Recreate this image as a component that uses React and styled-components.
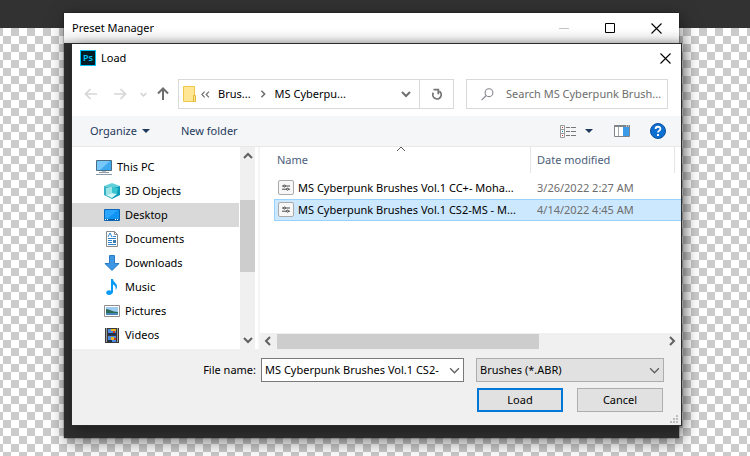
import React, { useState } from "react";
import styled, { createGlobalStyle, css } from "styled-components";

const PLACES = [
  { id: "3d", label: "3D Objects", icon: <ObjectsIcon /> },
  { id: "desktop", label: "Desktop", icon: <DesktopIcon /> },
  { id: "documents", label: "Documents", icon: <DocumentIcon /> },
  { id: "downloads", label: "Downloads", icon: <DownloadIcon /> },
  { id: "music", label: "Music", icon: <MusicIcon /> },
  { id: "pictures", label: "Pictures", icon: <PictureIcon /> },
  { id: "videos", label: "Videos", icon: <VideoIcon /> },
];

const FILES = [
  { id: 1, name: "MS Cyberpunk Brushes Vol.1 CC+- Moha...", date: "3/26/2022 2:27 AM" },
  { id: 2, name: "MS Cyberpunk Brushes Vol.1 CS2-MS - M...", date: "4/14/2022 4:45 AM" },
];

function CloseIcon() {
  return (
    <svg width="11" height="11" viewBox="0 0 11 11" stroke="#000" strokeWidth="1.1" aria-hidden="true">
      <path d="M.5 .5l10 10M10.5 .5l-10 10" />
    </svg>
  );
}

function Arrow({ dir, color }) {
  const turn = { left: 0, up: 90, right: 180 }[dir];
  return (
    <svg width="14" height="14" viewBox="0 0 14 14" fill="none" stroke={color} strokeWidth={dir === "up" ? 2 : 1.7} aria-hidden="true">
      <path transform={`rotate(${turn} 7 7)`} d="M13 7H1.8M6.5 2L1.5 7l5 5" />
    </svg>
  );
}

function Chevron({ dir = "down", size = 10, color = "#606060", weight = 2 }) {
  const turn = { down: 0, left: 90, up: 180, right: 270 }[dir];
  return (
    <svg width={size} height={size} viewBox="0 0 10 10" fill="none" stroke={color} strokeWidth={weight} aria-hidden="true">
      <path transform={`rotate(${turn} 5 5)`} d="M1 3l4 4 4-4" />
    </svg>
  );
}

function DoubleChevron() {
  return (
    <svg width="9" height="7" viewBox="0 0 9 7" fill="none" stroke="#707070" strokeWidth="1.2" aria-hidden="true">
      <path d="M3.600 .7L.9 3.500l2.700 2.800M7.900 .7L5.200 3.500l2.700 2.800" />
    </svg>
  );
}

function Caret() {
  return (
    <svg width="8" height="4" viewBox="0 0 8 4" fill="#1e395b" aria-hidden="true">
      <path d="M0 0h8L4 4z" />
    </svg>
  );
}

function FolderIcon() {
  return (
    <svg width="14" height="17" viewBox="0 0 14 17" aria-hidden="true">
      <path d="M.5 .5h11v15H.5z" fill="#ffe695" stroke="#edc84b" />
      <path d="M10.5 9.5h2v6h-2z" fill="#ffe695" stroke="#e2b93b" />
    </svg>
  );
}

function RefreshIcon() {
  return (
    <svg width="12" height="13" viewBox="0 0 12 13" fill="none" stroke="#757575" strokeWidth="1.8" aria-hidden="true">
      <path d="M8.300 3.200A4.200 4.200 0 1 1 2.300 4.700" />
      <path d="M2.500 1.600h4.800v4.600" />
    </svg>
  );
}

function SearchIcon() {
  return (
    <svg width="13" height="13" viewBox="0 0 13 13" fill="none" stroke="#858590" strokeWidth="1.1" aria-hidden="true">
      <circle cx="8" cy="4.7" r="3.9" />
      <path d="M5.2 7.5L.6 12.2" />
    </svg>
  );
}

function ViewIcon() {
  return (
    <svg width="16" height="13" viewBox="0 0 16 13" aria-hidden="true">
      <path d="M.5 .5h4v12h-4zM.5 4.5h4M.5 8.5h4" fill="#fff" stroke="#999" />
      <path d="M2 2h1v1H2zM2 10h1v1H2z" fill="#c33" />
      <path d="M2 6h1v1H2z" fill="#27c" />
      <path d="M6 2.500h4M11 2.500h5M6 6.500h4M11 6.500h5M6 10.500h4M11 10.500h5" stroke="#777" />
    </svg>
  );
}

function PaneIcon() {
  return (
    <svg width="16" height="12" viewBox="0 0 16 12" aria-hidden="true">
      <path d="M.5 .5h15v11H.5z" fill="#fff" stroke="#808488" />
      <path d="M0 0h16v2H0z" fill="#808488" />
      <path d="M4.5 2v9" stroke="#a5a8ab" />
      <path d="M9 2h6v9H9z" fill="#3b9be8" />
      <path d="M12 .5h1v1h-1zM14 .5h1v1h-1z" fill="#fff" />
    </svg>
  );
}

function HelpIcon() {
  return (
    <svg width="16" height="16" viewBox="0 0 16 16" aria-hidden="true">
      <circle cx="8" cy="8" r="7.5" fill="#0d6fd0" stroke="#0a4f9c" />
      <path d="M5.600 6C5.600 3 10.400 3 10.400 5.900 10.400 7.600 8 7.700 8 9.600" fill="none" stroke="#fff" strokeWidth="1.8" />
      <path d="M7 11h2v2H7z" fill="#fff" />
    </svg>
  );
}

function PcIcon() {
  return (
    <svg width="16" height="16" viewBox="0 0 16 16" aria-hidden="true">
      <path d="M.5 1.500h15v10H.5z" fill="#3fa9f0" stroke="#4a6d85" />
      <path d="M1 2h13L4 11H1z" fill="#76c8fa" />
      <path d="M6 12h4v1H6z" fill="#b8c4cc" />
      <path d="M3 13.500h10M0 15.500h16" stroke="#8b9ba6" />
    </svg>
  );
}

function ObjectsIcon() {
  return (
    <svg width="16" height="16" viewBox="0 0 16 16" aria-hidden="true">
      <path d="M0 3l8-3 8 3-8 2z" fill="#5fd0da" />
      <path d="M0 3l8 2v11l-8-4z" fill="#35b0c4" />
      <path d="M16 3L8 5v11l8-4z" fill="#0a9ab8" />
      <path d="M2 5l6-1v6l-6 2z" fill="#9be4e6" />
      <path d="M8 4l6 1-1 6-5-1z" fill="#38c4cf" />
      <path d="M2 12l6-2 5 1-5 4z" fill="#d2f6f6" />
    </svg>
  );
}

function DesktopIcon() {
  return (
    <svg width="16" height="12" viewBox="0 0 16 12" aria-hidden="true">
      <path d="M.5 .5h15v11H.5z" fill="#0f93f5" stroke="#0b67b3" />
      <path d="M1 1h13L4 9H1z" fill="#2ba6ff" />
      <path d="M1 10h14v1H1z" fill="#0a5a9e" />
      <path d="M1 10h1v1H1zM3 10h1v1H3zM11 10h1v1h-1zM13 10h1v1h-1z" fill="#fff" />
    </svg>
  );
}

function DocumentIcon() {
  return (
    <svg width="16" height="16" viewBox="0 0 16 16" aria-hidden="true">
      <path d="M2.500 .5h8l3 3v12h-11z" fill="#fff" stroke="#8b8b8b" />
      <path d="M10.500 .5v3h3" fill="none" stroke="#8b8b8b" />
      <path d="M4 6l2-4 2 4M9 5.500h3M4 7.500h8M4 9.500h4M4 11.500h4M4 13.500h8" fill="none" stroke="#2f86cf" />
      <path d="M9 9h3v3H9z" fill="#3f7cae" />
    </svg>
  );
}

function DownloadIcon() {
  return (
    <svg width="16" height="16" viewBox="0 0 16 16" aria-hidden="true">
      <path d="M5.500 .5h5v8h4.600L8 15.400.9 8.500h4.600z" fill="#3c97e4" stroke="#2a7cc4" />
    </svg>
  );
}

function MusicIcon() {
  return (
    <svg width="16" height="16" viewBox="0 0 16 16" fill="#0a9bf5" aria-hidden="true">
      <path d="M7 0h2c0 3 4 4 4 7.500 0 1.500-.6 2.800-1.500 3.500.8-3-.5-4.800-2.500-5.500v7.300C9 14.800 7 16 5 16c-3.700 0-3.700-4.500 0-4.700.8 0 1.500.2 2 .5z" />
    </svg>
  );
}

function PictureIcon() {
  return (
    <svg width="16" height="12" viewBox="0 0 16 12" aria-hidden="true">
      <path d="M.5 .5h15v11H.5z" fill="#fff" stroke="#8f8f8f" />
      <path d="M2 2h12v8H2z" fill="#9cccf0" />
      <path d="M2 4c4 0 6 3 12 3v1H2z" fill="#2e6a5a" />
      <path d="M2 8h12v2H2z" fill="#4786b8" />
    </svg>
  );
}

function VideoIcon() {
  return (
    <svg width="16" height="16" viewBox="0 0 16 16" aria-hidden="true">
      <path d="M1 1h14v15H1z" fill="#3a3a3a" />
      <path d="M2.500 1.500v14M13.500 1.500v14" stroke="#fff" strokeDasharray="1 1" />
      <path d="M4 2h8v6H4zM4 9h8v6H4z" fill="#4a8ae0" />
      <path d="M7 2h5v2H7zM7 10h3v3H7z" fill="#e8b923" />
      <path d="M9 4h2v2H9zM10 11h2v2h-2z" fill="#c8372d" />
      <path d="M4 6h8v2H4zM4 13h4v2H4z" fill="#1d3050" />
    </svg>
  );
}

function BrushFileIcon() {
  return (
    <svg width="16" height="16" viewBox="0 0 16 16" fill="none" aria-hidden="true">
      <rect x=".5" y=".5" width="15" height="14" rx="1.5" fill="#f7f7f7" stroke="#a9a9a9" />
      <path d="M4 6h8M4 9.200h8" stroke="#4a4a4a" />
      <circle cx="6.500" cy="6" r="1" fill="#fff" stroke="#444" />
      <circle cx="9.500" cy="9.200" r="1" fill="#fff" stroke="#444" />
    </svg>
  );
}

export default function App() {
  const [place, setPlace] = useState("desktop");
  const [selected, setSelected] = useState(2);
  const [fileName, setFileName] = useState("MS Cyberpunk Brushes Vol.1 CS2-");

  return (
    <Desktop>
      <GlobalStyle />
      <PresetWindow>
        <PresetTitle>
          <Title>Preset Manager</Title>
          <WindowButton aria-label="Minimize" disabled>
            <svg width="10" height="1" aria-hidden="true"><path d="M0 0h10v1H0z" fill="#c4c4c4" /></svg>
          </WindowButton>
          <WindowButton aria-label="Maximize">
            <svg width="10" height="10" aria-hidden="true"><path d="M.5 .5h9v9h-9z" fill="none" stroke="#000" /></svg>
          </WindowButton>
          <WindowButton aria-label="Close"><CloseIcon /></WindowButton>
        </PresetTitle>

        <Dialog role="dialog" aria-label="Load">
          <DialogTitle>
            <PsBadge aria-hidden="true">Ps</PsBadge>
            <Title>Load</Title>
            <DialogClose aria-label="Close"><CloseIcon /></DialogClose>
          </DialogTitle>

          <NavBar>
            <NavButtons>
              <IconButton aria-label="Back"><Arrow dir="left" color="#d6d6d6" /></IconButton>
              <IconButton aria-label="Forward"><Arrow dir="right" color="#d6d6d6" /></IconButton>
              <IconButton aria-label="Recent locations"><Chevron size={7} color="#cfcfcf" /></IconButton>
              <IconButton aria-label="Up"><Arrow dir="up" color="#6e6e6e" /></IconButton>
            </NavButtons>
            <AddressBar>
              <FolderIcon />
              <DoubleChevron />
              <Crumb>Brus...</Crumb>
              <Chevron dir="right" size={8} color="#707070" />
              <Crumb>MS Cyberpu...</Crumb>
              <HistoryButton aria-label="Previous locations"><Chevron color="#707070" /></HistoryButton>
              <RefreshButton aria-label="Refresh"><RefreshIcon /></RefreshButton>
            </AddressBar>
            <SearchBox>
              <SearchIcon />
              <input aria-label="Search" placeholder="Search MS Cyberpunk Brush..." />
            </SearchBox>
          </NavBar>

          <Toolbar>
            <ToolButton>Organize <Caret /></ToolButton>
            <ToolButton>New folder</ToolButton>
            <ToolIcons>
              <IconButton aria-label="View"><ViewIcon /></IconButton>
              <IconButton aria-label="More views"><Caret /></IconButton>
              <IconButton aria-label="Preview pane"><PaneIcon /></IconButton>
              <IconButton aria-label="Help"><HelpIcon /></IconButton>
            </ToolIcons>
          </Toolbar>

          <Body>
            <Sidebar>
              <Place $root><PcIcon />This PC</Place>
              {PLACES.map((p) => (
                <Place key={p.id} $active={p.id === place} onClick={() => setPlace(p.id)}>
                  {p.icon}
                  {p.label}
                </Place>
              ))}
            </Sidebar>
            <VScroll aria-hidden="true">
              <Chevron dir="up" />
              <VThumb />
              <Chevron />
            </VScroll>
            <FilePane>
              <FileTable>
                <colgroup>
                  <col />
                  <col className="date" />
                  <col className="rest" />
                </colgroup>
                <thead>
                  <tr>
                    <th scope="col">
                      Name
                      <SortMark><Chevron dir="up" size={10} weight={1} /></SortMark>
                    </th>
                    <th scope="col">Date modified</th>
                    <td />
                  </tr>
                </thead>
                <tbody>
                  {FILES.map((f) => (
                    <FileRow
                      key={f.id}
                      $selected={f.id === selected}
                      onClick={() => {
                        setSelected(f.id);
                        setFileName(f.name);
                      }}
                    >
                      <td>
                        <FileName><BrushFileIcon />{f.name}</FileName>
                      </td>
                      <td className="date">{f.date}</td>
                      <td />
                    </FileRow>
                  ))}
                </tbody>
              </FileTable>
              <HScroll aria-hidden="true">
                <Chevron dir="left" />
                <HTrack><HThumb /></HTrack>
                <Chevron dir="right" />
              </HScroll>
            </FilePane>
          </Body>

          <Footer>
            <FieldRow>
              <label htmlFor="file-name">File name:</label>
              <ComboBox>
                <input id="file-name" value={fileName} onChange={(e) => setFileName(e.target.value)} />
                <IconButton aria-label="Recent file names"><Chevron size={11} weight={1.2} /></IconButton>
              </ComboBox>
              <TypeSelect>
                <select aria-label="File type">
                  <option>Brushes (*.ABR)</option>
                </select>
                <Chevron size={11} weight={1.2} />
              </TypeSelect>
            </FieldRow>
            <ActionRow>
              <ActionButton $primary>Load</ActionButton>
              <ActionButton>Cancel</ActionButton>
            </ActionRow>
            <Grip aria-hidden="true">
              <svg width="9" height="9" fill="#bdbdbd">
                <path d="M6 0h2v2H6zM3 3h2v2H3zM6 3h2v2H6zM0 6h2v2H0zM3 6h2v2H3zM6 6h2v2H6z" />
              </svg>
            </Grip>
          </Footer>
        </Dialog>
      </PresetWindow>
    </Desktop>
  );
}

const GlobalStyle = createGlobalStyle`
  * {
    box-sizing: border-box;
  }
  body {
    margin: 0;
  }
  body, button, input, select, table {
    font-family: "Noto Sans", "Open Sans", sans-serif;
    font-size: 11px;
    line-height: 16px;
    color: #000;
  }
  button {
    padding: 0;
    border: 0;
    background: none;
  }
  svg {
    display: block;
    flex-shrink: 0;
  }
`;

const Desktop = styled.main`
  min-height: 100vh;
  padding: 13px 71px 18px 64px;
  overflow: hidden;
  background:
    linear-gradient(#323232, #323232) 0 0 / 100% 28px no-repeat,
    repeating-conic-gradient(#fff 0 25%, #cbcbcb 0 50%) 11px 28px / 16px 16px;
`;

const PresetWindow = styled.section`
  padding-bottom: 13px;
  background: #2e2e2e;
  box-shadow: 0 0 1px #000, 2px 4px 16px rgba(0, 0, 0, 0.5);
`;

const PresetTitle = styled.header`
  display: flex;
  height: 30px;
  padding-left: 8px;
  align-items: center;
  background: linear-gradient(#fff 50%, #f4f4f4 80%, #d6d6d6);
`;

const Title = styled.h1`
  flex: 1;
  margin: 0;
  font-size: 11px;
  font-weight: 400;
`;

const WindowButton = styled.button`
  display: grid;
  width: 46px;
  height: 28px;
  place-items: center;
`;

const Dialog = styled.div`
  margin: 1px -2px 0 8px;
  background: #fff;
  box-shadow: 0 0 0 1px #2b2b2b, 2px 3px 14px rgba(0, 0, 0, 0.45);
`;

const DialogTitle = styled.header`
  display: flex;
  height: 28px;
  padding-left: 8px;
  align-items: center;
  gap: 5px;
`;

const PsBadge = styled.span`
  display: grid;
  width: 16px;
  height: 16px;
  place-items: center;
  border: 1px solid #00c8ff;
  background: #001d26;
  color: #00c8ff;
  font-size: 9px;
  font-weight: 600;
  line-height: 12px;
`;

const DialogClose = styled(WindowButton)`
  width: 31px;
`;

const NavBar = styled.div`
  display: flex;
  padding: 7px 13px 7px 12px;
  gap: 12px;
`;

const IconButton = styled.button`
  display: grid;
  place-items: center;
`;

const NavButtons = styled.div`
  display: grid;
  width: 82px;
  grid-template-columns: 29px 27px 16px 14px;
  align-items: center;
  justify-items: start;
`;

const AddressBar = styled.div`
  display: flex;
  flex: 1;
  height: 30px;
  padding-left: 4px;
  align-items: center;
  gap: 8px;
  border: 1px solid #d9d9d9;

  > svg:first-child {
    margin-right: -4px;
  }
`;

const Crumb = styled.span`
  white-space: nowrap;
`;

const HistoryButton = styled(IconButton)`
  margin-left: auto;
`;

const RefreshButton = styled(IconButton)`
  width: 34px;
  height: 28px;
  border-left: 1px solid #d9d9d9;
`;

const SearchBox = styled.div`
  display: flex;
  width: 202px;
  padding-left: 14px;
  align-items: center;
  gap: 12px;
  border: 1px solid #d9d9d9;

  input {
    width: 100%;
    min-width: 0;
    padding: 0;
    border: 0;
    outline: none;
    background: none;
  }
  input::placeholder {
    color: #6d6d6d;
    opacity: 1;
  }
`;

const Toolbar = styled.div`
  display: flex;
  height: 31px;
  padding: 0 15px 0 18px;
  align-items: center;
  gap: 31px;
  background: #f5f6f7;
  border-bottom: 1px solid #e8e8e8;
`;

const ToolButton = styled.button`
  display: flex;
  align-items: center;
  gap: 5px;
  color: #1e395b;
`;

const ToolIcons = styled.div`
  display: flex;
  margin-left: auto;
  align-items: center;

  button:nth-child(2) {
    margin: 0 21px 0 9px;
  }
  button:nth-child(4) {
    margin-left: 20px;
  }
`;

const Body = styled.div`
  display: flex;
  min-height: 202px;
`;

const Sidebar = styled.nav`
  width: 168px;
  padding: 8px 1px 2px 0;
`;

const Place = styled.button`
  display: flex;
  width: 100%;
  height: 24px;
  padding-left: ${(p) => (p.$root ? "24px" : "32px")};
  align-items: center;
  gap: 5px;
  background: ${(p) => (p.$active ? "#d9d9d9" : "none")};
`;

const VScroll = styled.div`
  display: flex;
  width: 15px;
  padding: 4px 0;
  flex-direction: column;
  align-items: center;
  justify-content: space-between;
  background: #f0f0f0;
`;

const VThumb = styled.div`
  width: 15px;
  height: 72px;
  margin-bottom: 24px;
  background: #cdcdcd;
`;

const FilePane = styled.div`
  display: flex;
  flex: 1;
  min-width: 0;
  margin-left: 3px;
  flex-direction: column;
  justify-content: space-between;
  border-left: 2px solid #f5f5f5;
`;

const FileTable = styled.table`
  width: calc(100% - 14px);
  margin-left: 14px;
  border-collapse: separate;
  border-spacing: 0;
  table-layout: fixed;

  .date {
    width: 144px;
  }
  .rest {
    width: 6px;
  }
  td {
    padding: 0;
  }
  th {
    position: relative;
    height: 26px;
    padding: 0 0 0 6px;
    font-weight: 400;
    text-align: left;
    color: #4c607a;
    border-right: 1px solid #e5e5e5;
  }
  th:first-child {
    padding-left: 3px;
  }
  tbody::before {
    content: "";
    display: block;
    height: 4px;
  }
`;

const SortMark = styled.span`
  position: absolute;
  top: -3px;
  left: calc(50% - 6px);
`;

const FileRow = styled.tr`
  td {
    height: 22px;
    border: solid transparent;
    border-width: 1px 0;
  }
  td:first-child {
    border-left-width: 1px;
  }
  td.date {
    padding-left: 6px;
    color: #6d6d6d;
  }
  ${(p) =>
    p.$selected &&
    css`
      td {
        background: #cce8ff;
        border-color: #99d1ff;
      }
    `}
`;

const FileName = styled.div`
  display: flex;
  padding-left: 3px;
  align-items: center;
  gap: 4px;
  white-space: nowrap;
`;

const HScroll = styled.div`
  display: flex;
  height: 16px;
  padding: 0 4px 0 3px;
  align-items: center;
  gap: 4px;
  background: #f0f0f0;
`;

const HTrack = styled.div`
  flex: 1;
  height: 15px;
`;

const HThumb = styled.div`
  width: 68%;
  height: 100%;
  background: #cdcdcd;
`;

const Footer = styled.footer`
  position: relative;
  padding: 9px 17px 13px;
  background: #f0f0f0;
`;

const FieldRow = styled.div`
  display: flex;
  align-items: center;
  justify-content: flex-end;

  label {
    margin-right: 5px;
  }
`;

const ComboBox = styled.div`
  display: flex;
  width: 203px;
  height: 24px;
  margin-right: 12px;
  padding: 0 3px;
  border: 1px solid #7a7a7a;
  background: #fff;

  input {
    flex: 1;
    min-width: 0;
    padding: 0;
    border: 0;
    outline: none;
    background: none;
  }
`;

const TypeSelect = styled.div`
  position: relative;
  width: 188px;

  select {
    width: 100%;
    height: 24px;
    padding: 0 3px;
    appearance: none;
    border: 1px solid #adadad;
    border-radius: 0;
    background: #e1e1e1;
  }
  svg {
    position: absolute;
    top: 7px;
    right: 4px;
    pointer-events: none;
  }
`;

const ActionRow = styled.div`
  display: flex;
  margin-top: 6px;
  padding-right: 1px;
  justify-content: flex-end;
  gap: 14px;
`;

const ActionButton = styled.button`
  width: 86px;
  height: 24px;
  background: #e1e1e1;
  border: ${(p) => (p.$primary ? "2px solid #0078d7" : "1px solid #adadad")};
`;

const Grip = styled.span`
  position: absolute;
  right: 2px;
  bottom: 1px;
`;
